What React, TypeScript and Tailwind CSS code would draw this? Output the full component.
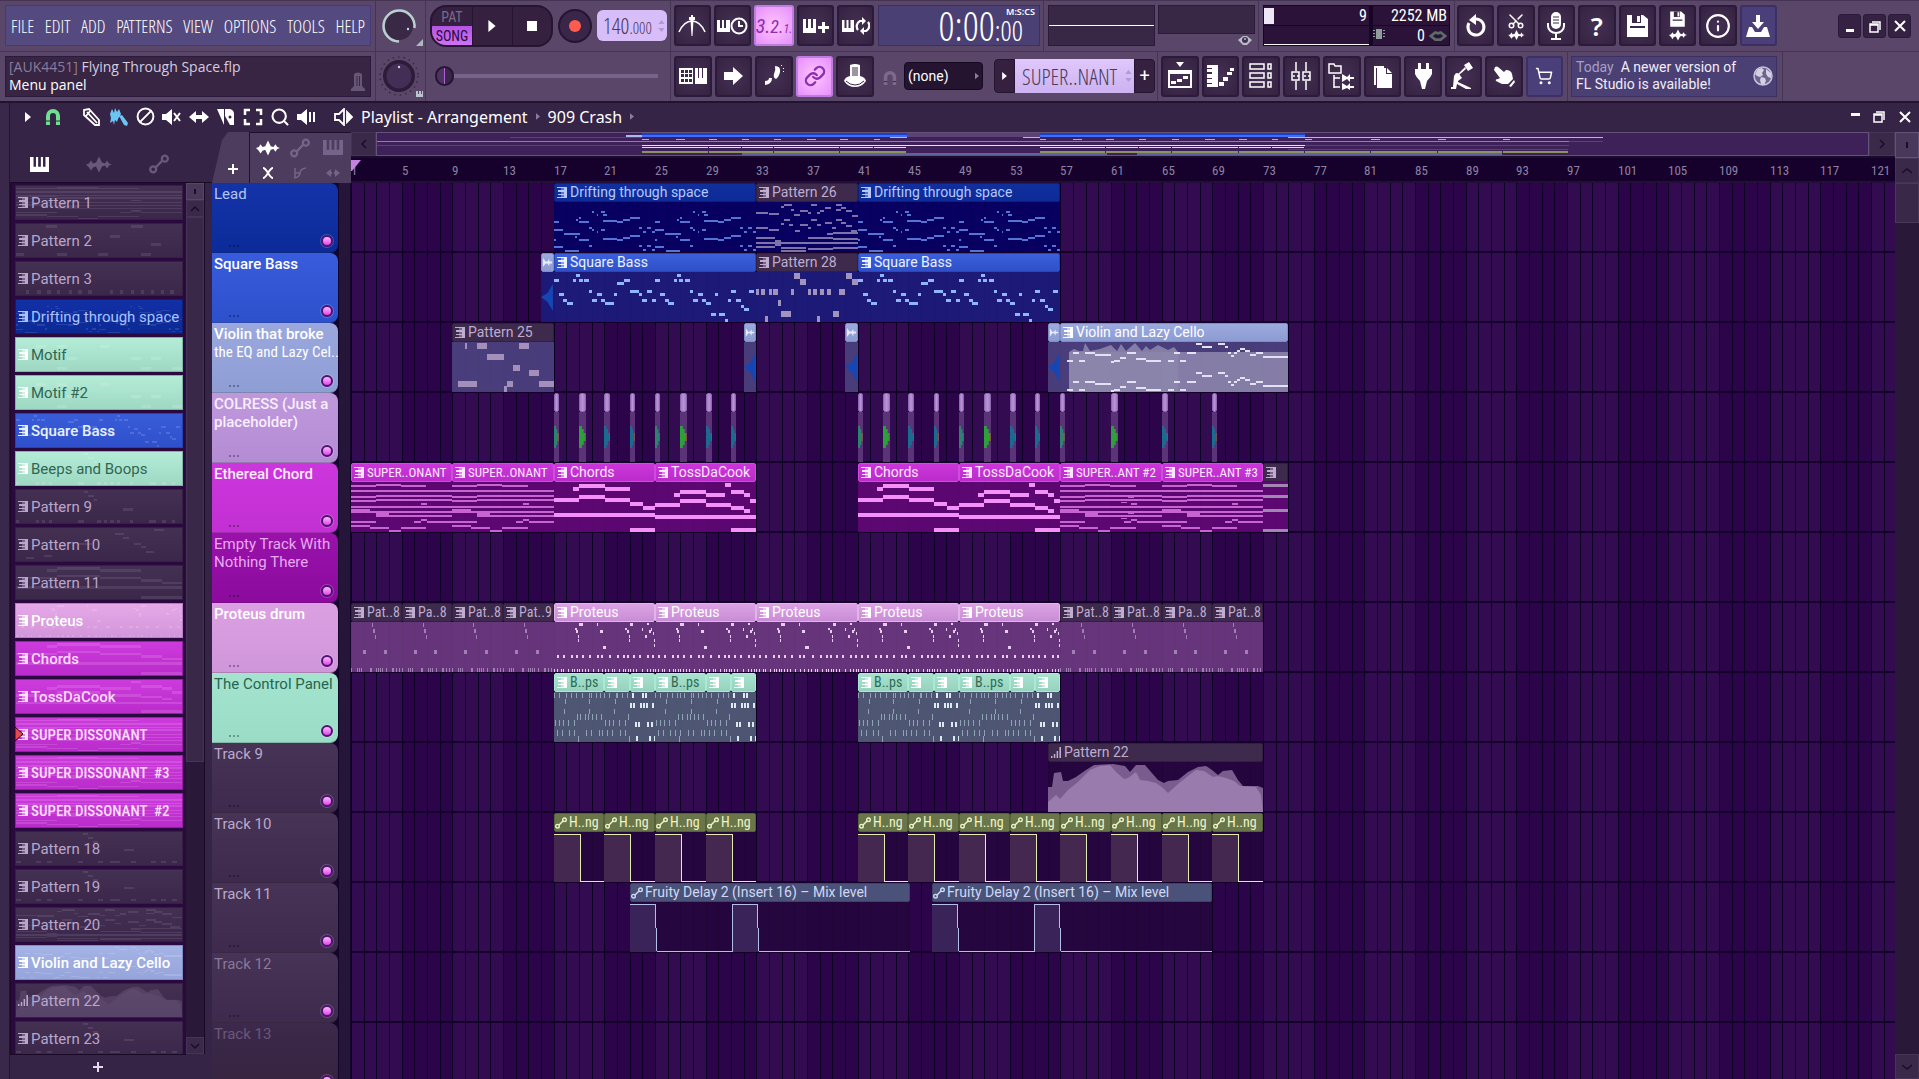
import type { ReactNode } from "react";
import {
  Scissors,
  Info,
  Link,
  ShoppingCart,
  Search,
  Ban,
} from "lucide-react";

// x, y, width, height (px inside a clip body that is 50px high)
type Note = [number, number, number, number];
type Kind = "midi" | "audio" | "auto" | "event";

interface Pattern {
  width: number;
  notes: Note[];
}

const row = (y: number, w: number, h: number, xs: number[]): Note[] => xs.map((x) => [x, y, w, h]);
const tall = (h: number, list: [number, number, number][]): Note[] => list.map(([x, y, w]) => [x, y, w, h]);
const shift = (notes: Note[], dx: number, dy = 0): Note[] => notes.map(([x, y, w, h]) => [x + dx, y + dy, w, h]);

const driftHalf = tall(2, [
  [0, 19, 5], [22, 17, 2], [25, 15, 2], [25, 19, 10], [38, 9, 2], [43, 12, 1], [47, 9, 4], [49, 12, 4],
  [49, 18, 14], [63, 19, 6], [69, 17, 7], [76, 15, 10], [0, 27, 9], [10, 31, 16], [35, 25, 3], [38, 27, 2],
  [49, 36, 14], [63, 37, 6], [69, 35, 7], [76, 33, 10], [25, 37, 10], [21, 34, 2], [0, 37, 2], [0, 44, 9],
  [11, 48, 14], [35, 43, 3], [47, 27, 4], [43, 29, 1], [85, 25, 3], [89, 29, 3], [93, 25, 4], [98, 29, 3],
  [85, 43, 3], [89, 47, 3], [93, 43, 4], [98, 47, 3],
]);

const superNotes = tall(2, [
  [0, 3, 25], [25, 2, 25], [50, 3, 25], [0, 8, 101], [0, 14, 25], [25, 13, 76], [0, 18, 25], [25, 17, 76],
  [70, 21, 6], [0, 24, 101], [0, 27, 19], [0, 29, 101], [25, 31, 13], [25, 33, 76], [0, 39, 25], [63, 39, 7],
  [70, 37, 6], [76, 39, 25], [0, 43, 19], [19, 45, 19], [38, 48, 12], [50, 45, 25],
]);

const celloNotes = tall(2, [
  [7, 18, 6], [13, 10, 6], [19, 18, 6], [25, 10, 10], [35, 12, 16], [51, 19, 3], [54, 18, 6], [60, 15, 6],
  [67, 10, 9], [76, 16, 10], [86, 18, 15], [108, 18, 6], [114, 10, 6], [120, 18, 6], [127, 10, 9],
  [136, 1, 6], [142, 4, 10], [158, 1, 7], [165, 4, 3], [168, 10, 3], [171, 13, 3], [174, 10, 3], [177, 8, 3],
  [180, 6, 5], [185, 8, 5], [190, 12, 6], [196, 10, 7], [203, 14, 25],
]);

const beepRows: Note[] = [
  ...row(1, 1, 5, [0, 5, 12, 17, 22, 25, 29, 36, 38, 43, 47]),
  [11, 7, 1, 5], [36, 7, 1, 5], [10, 17, 1, 5], [36, 17, 1, 5],
  ...row(22, 1, 6, [23, 27, 32, 35, 39, 43, 48]),
  ...row(28, 1, 6, [1, 5, 9, 14, 20]),
  ...row(38, 1, 6, [3, 8, 15, 20, 25, 33, 38, 46, 49]),
  [24, 44, 1, 6],
];

const P: Record<string, Pattern> = {
  drift: { width: 202, notes: [...driftHalf, ...shift(driftHalf, 101)] },
  p26: {
    width: 101,
    notes: tall(2, [
      [0, 10, 12], [13, 11, 10], [28, 2, 8], [25, 4, 3], [35, 7, 3], [38, 12, 6], [44, 8, 7], [51, 10, 3],
      [54, 2, 6], [28, 17, 6], [54, 17, 6], [0, 25, 12], [13, 27, 10], [25, 21, 3], [33, 22, 4], [39, 28, 5],
      [44, 22, 7], [51, 25, 3], [0, 35, 19], [19, 38, 6], [0, 40, 101], [19, 42, 6], [0, 44, 19], [25, 45, 25],
      [25, 48, 25], [51, 35, 25], [76, 36, 25], [51, 46, 25], [76, 45, 25], [76, 30, 25], [70, 31, 6],
      [60, 10, 3], [63, 8, 4], [68, 5, 6], [79, 7, 5], [84, 5, 5], [89, 8, 6], [95, 13, 6], [79, 2, 6],
      [79, 17, 6], [68, 20, 7], [75, 25, 4], [60, 22, 4], [84, 20, 5], [89, 23, 6], [94, 28, 6],
    ]),
  },
  bass: {
    width: 202,
    notes: tall(3, [
      [0, 7, 5], [19, 7, 3], [22, 2, 4], [25, 7, 4], [30, 7, 5], [5, 21, 5], [9, 27, 4], [13, 30, 6], [35, 18, 3],
      [38, 27, 5], [43, 21, 5], [47, 27, 4], [51, 30, 9], [60, 21, 3], [63, 10, 7], [70, 7, 6], [76, 18, 9],
      [85, 21, 3], [88, 27, 5], [93, 18, 5], [98, 27, 4], [101, 7, 5], [106, 21, 5], [111, 27, 4], [114, 30, 6],
      [120, 7, 3], [123, 2, 4], [125, 7, 4], [131, 7, 5], [136, 18, 3], [139, 27, 5], [144, 21, 5], [148, 27, 4],
      [152, 30, 5], [161, 21, 3], [157, 41, 5], [165, 41, 6], [171, 47, 3], [174, 27, 3], [177, 18, 5],
      [182, 27, 5], [187, 33, 3], [190, 36, 5], [195, 18, 5],
    ]),
  },
  p28: {
    width: 101,
    notes: tall(6, [
      [0, 17, 3], [5, 17, 4], [13, 17, 3], [17, 17, 5], [35, 17, 3], [22, 28, 3], [25, 39, 10], [9, 44, 3],
      [38, 1, 6], [44, 7, 6], [51, 17, 3], [56, 17, 4], [63, 17, 4], [70, 17, 4], [82, 17, 6], [89, 1, 6],
      [95, 7, 6], [76, 39, 6], [60, 44, 3],
    ]),
  },
  p25: {
    width: 101,
    notes: tall(6, [
      [13, 1, 2], [25, 1, 10], [66, 1, 10], [35, 12, 16], [60, 23, 7], [76, 28, 10], [6, 39, 19], [54, 39, 6],
      [86, 39, 15], [51, 44, 3],
    ]),
  },
  cello: { width: 228, notes: [...celloNotes, ...shift(celloNotes, 0, 29)] },
  super: { width: 101, notes: superNotes },
  super2: { width: 101, notes: [...superNotes, [60, 20, 6, 1], [67, 15, 6, 1], [67, 31, 6, 1], [60, 36, 6, 1]] },
  chords: {
    width: 101,
    notes: tall(4, [
      [19, 5, 6], [25, 2, 26], [51, 5, 25], [0, 16, 25], [25, 13, 26], [51, 16, 25], [76, 20, 13], [89, 24, 12],
      [0, 31, 101], [76, 46, 25],
    ]),
  },
  toss: {
    width: 101,
    notes: tall(4, [
      [19, 11, 6], [25, 8, 26], [51, 11, 19], [70, 1, 6], [76, 8, 13], [89, 11, 6], [95, 17, 6], [0, 21, 25],
      [25, 17, 26], [51, 21, 25], [76, 24, 13], [89, 27, 6], [0, 33, 101], [76, 46, 25],
    ]),
  },
  tail: { width: 25, notes: row(2, 25, 3, [0]).concat(row(13, 25, 3, [0]), row(27, 25, 3, [0]), row(47, 25, 3, [0])) },
  p8: {
    width: 51,
    notes: [
      [21, 1, 1, 4], [22, 7, 2, 4], [24, 13, 1, 4], [12, 28, 3, 4], [33, 28, 3, 4],
      ...row(46, 1, 4, [0, 6, 8, 10, 19, 20, 25, 27, 29, 31, 35, 41, 42, 45, 48]),
    ],
  },
  proteus: {
    width: 101,
    notes: [
      [25, 1, 4, 3], [43, 1, 1, 3], [76, 1, 3, 3], [93, 1, 2, 2], [21, 6, 2, 2], [22, 8, 2, 3], [24, 13, 1, 3],
      [24, 17, 1, 3], [46, 8, 3, 3], [49, 24, 3, 3], [71, 6, 2, 2], [73, 8, 2, 3], [75, 13, 1, 3],
      [75, 17, 1, 3], [88, 6, 1, 3], [91, 13, 2, 3], [95, 8, 2, 3], [97, 6, 1, 3], [99, 10, 1, 3],
      [100, 17, 1, 3], [100, 22, 1, 3],
      ...row(33, 2, 3, [3, 9, 17, 22, 28, 35, 43, 47, 55, 63, 69, 73, 79, 85, 93, 98]),
      ...row(47, 1, 3, [0, 3, 7, 9, 14, 18, 20, 23, 25, 28, 31, 34, 39, 44, 48, 51, 54, 58, 60, 65, 69, 71, 74, 76, 79, 82, 88, 93, 96, 99]),
    ],
  },
  beeps: { width: 51, notes: beepRows },
  beepsShort: { width: 25, notes: beepRows.filter(([x]) => x < 25) },
  beepsEnd: {
    width: 25,
    notes: [
      ...row(1, 2, 5, [2, 12, 15]),
      ...row(11, 2, 5, [0, 3, 10, 13, 16, 22]),
      ...row(30, 2, 5, [5, 8, 17, 21]),
      ...row(44, 2, 5, [6, 19, 24]),
    ],
  },
  p2: { width: 101, notes: tall(4, [[18, 2, 7], [70, 2, 7], [57, 17, 6], [25, 29, 6], [82, 29, 6], [0, 44, 5], [25, 44, 6], [50, 44, 6], [76, 44, 6]]) },
  p3: { width: 101, notes: row(43, 2, 5, [6, 13, 19, 25, 32, 38, 44, 57, 63, 70, 76, 82, 88, 94]) },
  motif: { width: 101, notes: tall(4, [[12, 11, 6], [25, 11, 6], [51, 11, 6], [31, 29, 6], [70, 29, 6], [82, 29, 6], [25, 44, 6], [76, 44, 6], [95, 44, 6]]) },
  p10: { width: 101, notes: tall(3, [[84, 1, 6], [60, 7, 6], [65, 14, 4], [38, 22, 8], [72, 22, 4], [76, 28, 3], [79, 35, 5], [17, 41, 5], [6, 44, 5]]) },
  p18: { width: 101, notes: tall(3, [[41, 1, 3], [44, 7, 3], [47, 13, 3], [66, 26, 6], [0, 44, 3], [12, 44, 3], [19, 44, 3], [38, 44, 3], [50, 44, 3], [57, 44, 6], [70, 44, 3], [82, 44, 3], [88, 44, 3], [95, 44, 3]]) },
  empty: { width: 25, notes: [] },
};

interface PickerItem {
  name: string;
  tone: string;
  pattern: keyof typeof P;
  kind?: Kind;
  selected?: boolean;
}

const PICKER: PickerItem[] = [
  { name: "Pattern 1", tone: "plain", pattern: "super" },
  { name: "Pattern 2", tone: "plain", pattern: "p2" },
  { name: "Pattern 3", tone: "plain", pattern: "p3" },
  { name: "Drifting through space", tone: "navy", pattern: "drift" },
  { name: "Motif", tone: "mint", pattern: "motif" },
  { name: "Motif #2", tone: "mint", pattern: "motif" },
  { name: "Square Bass", tone: "blue", pattern: "bass" },
  { name: "Beeps and Boops", tone: "mint", pattern: "p8" },
  { name: "Pattern 9", tone: "plain", pattern: "p8" },
  { name: "Pattern 10", tone: "plain", pattern: "p10" },
  { name: "Pattern 11", tone: "plain", pattern: "chords" },
  { name: "Proteus", tone: "pink", pattern: "proteus" },
  { name: "Chords", tone: "magenta", pattern: "chords" },
  { name: "TossDaCook", tone: "magenta", pattern: "toss" },
  { name: "SUPER DISSONANT", tone: "magenta", pattern: "super", selected: true },
  { name: "SUPER DISSONANT  #3", tone: "magenta", pattern: "super" },
  { name: "SUPER DISSONANT  #2", tone: "magenta", pattern: "super" },
  { name: "Pattern 18", tone: "plain", pattern: "p18" },
  { name: "Pattern 19", tone: "plain", pattern: "p18" },
  { name: "Pattern 20", tone: "plain", pattern: "p26" },
  { name: "Violin and Lazy Cello", tone: "sky", pattern: "cello" },
  { name: "Pattern 22", tone: "plain", pattern: "empty", kind: "event" },
  { name: "Pattern 23", tone: "plain", pattern: "p18" },
];

const PICKER_TONES: Record<string, string> = {
  plain: "from-[#443051] to-[#3b274a] border-[#34213f] text-[#b9a6cc]",
  navy: "from-[#1230a6] to-[#0c2a94] border-[#0a1f78] text-[#a9c4ff]",
  mint: "from-[#b4ecd8] to-[#9ed8c2] border-[#7fb5a2] text-[#2f6653]",
  blue: "from-[#395cda] to-[#2f50ca] border-[#2643ab] text-[#e8f2ff] font-medium",
  pink: "from-[#e6a8e8] to-[#d196da] border-[#b77fc0] text-white font-medium",
  magenta: "from-[#cd3bdc] to-[#ba2bcb] border-[#94209f] text-[#ffdcff] font-medium",
  sky: "from-[#a5b3e6] to-[#95a4da] border-[#7f8cc0] text-white font-medium",
};

interface Clip {
  start: number;
  end: number;
  title?: string;
  tone: string;
  pattern?: keyof typeof P;
  kind?: Kind;
  note?: string;
}

const TONES: Record<string, { head: string; map: string }> = {
  navy: { head: "bg-linear-to-b from-[#10309f] to-[#0d2a96] border-[#0a227c] text-[#b4c8ff]", map: "#1c3fc4" },
  blue: { head: "bg-linear-to-b from-[#3b60dc] to-[#2f50c8] border-[#2a48b4] text-[#eaf2ff]", map: "#3f6cff" },
  plain: { head: "bg-[#3d2a4d] border-[#33203f] text-[#bfaccf]", map: "#5c4173" },
  sky: { head: "bg-linear-to-b from-[#9caadf] to-[#8c9bd2] border-[#7f8dc4] text-white", map: "#a9b9f2" },
  lilac: { head: "bg-linear-to-r from-[#a37bc4] via-[#b894d6] to-[#a37bc4] border-[#8f68b3] text-white", map: "#c79ee6" },
  magenta: { head: "bg-linear-to-b from-[#cb36da] to-[#bb2ccb] border-[#d24be0] text-[#ffe6ff]", map: "#ee40ee" },
  pink: { head: "bg-linear-to-b from-[#dca2e4] to-[#c98dd6] border-[#e3b3ea] text-white", map: "#ffd2ff" },
  mint: { head: "bg-linear-to-b from-[#a6e2cd] to-[#97d2be] border-[#a9ead2] text-[#2c6a55]", map: "#b8f2e2" },
  olive: { head: "bg-[#69764a] border-[#566239] text-[#eef3c8]", map: "#8b9460" },
  slate: { head: "bg-[#4b5279] border-[#3d4468] text-[#cfd8f4]", map: "#5f629c" },
};

interface Track {
  name: string;
  // second line, set in the narrow face
  more?: string;
  header: string;
  body: string;
  clips: Clip[];
}

const blips = [17, 19, 21, 23, 25, 27, 29, 31, 41, 43, 45, 47, 49, 51, 53, 55, 57, 61, 65, 69];

const beepClips = (s: number): Clip[] =>
  [0, 8].flatMap((o) => [
    { start: s + o, end: s + o + 4, title: "B..ps", tone: "mint", pattern: "beeps", note: "#8fa3b4" },
    { start: s + o + 4, end: s + o + 6, title: "", tone: "mint", pattern: "beepsShort", note: "#8fa3b4" },
    { start: s + o + 6, end: s + o + 8, title: "", tone: "mint", pattern: "beepsEnd", note: "#dcebf0" },
  ]);

const pat = (start: number, title: string): Clip => ({ start, end: start + 4, title, tone: "plain", pattern: "p8", note: "#a07fb4" });
const hang = (start: number): Clip => ({ start, end: start + 4, title: "H..ng", tone: "olive", kind: "auto" });
const proteus = (start: number): Clip => ({ start, end: start + 8, title: "Proteus", tone: "pink", pattern: "proteus", note: "#e9cdf0" });

const TRACKS: Track[] = [
  {
    name: "Lead",
    header: "from-[#1433a8] to-[#0c2b99] text-[#b4c4f4]",
    body: "bg-[#050063]/90",
    clips: [
      { start: 17, end: 33, title: "Drifting through space", tone: "navy", pattern: "drift", note: "#5674d2" },
      { start: 33, end: 41, title: "Pattern 26", tone: "plain", pattern: "p26", note: "#7d72aa" },
      { start: 41, end: 57, title: "Drifting through space", tone: "navy", pattern: "drift", note: "#5674d2" },
    ],
  },
  {
    name: "Square Bass",
    header: "from-[#385cdc] to-[#2d50cc] text-white font-medium",
    body: "bg-[#1b1c7c]/90",
    clips: [
      { start: 16, end: 17, tone: "sky", kind: "audio" },
      { start: 17, end: 33, title: "Square Bass", tone: "blue", pattern: "bass", note: "#90b6ff" },
      { start: 33, end: 41, title: "Pattern 28", tone: "plain", pattern: "p28", note: "#a094bf" },
      { start: 41, end: 57, title: "Square Bass", tone: "blue", pattern: "bass", note: "#90b6ff" },
    ],
  },
  {
    name: "Violin that broke",
    more: "the EQ and Lazy Cel..",
    header: "from-[#9aa8de] to-[#8e9dd4] text-white font-medium",
    body: "bg-[#4c4280]/90",
    clips: [
      { start: 9, end: 17, title: "Pattern 25", tone: "plain", pattern: "p25", note: "#a48fbb" },
      { start: 32, end: 33, tone: "sky", kind: "audio" },
      { start: 40, end: 41, tone: "sky", kind: "audio" },
      { start: 56, end: 57, tone: "sky", kind: "audio" },
      { start: 57, end: 75, title: "Violin and Lazy Cello", tone: "sky", pattern: "cello", note: "#e2e2f4" },
    ],
  },
  {
    name: "COLRESS (Just a placeholder)",
    header: "from-[#bf98dc] to-[#b48cd4] text-[#f8eeff] font-medium",
    body: "bg-[#5a3476]",
    clips: blips.map((start, i) => ({
      start,
      end: start + [0.4, 0.55, 0.48, 0.4][i % 4],
      tone: "lilac",
      kind: "audio",
      note: start === 61 || (start < 60 && i % 4 === 1) ? "#2f9e3c" : i % 4 === 0 ? "#2d8272" : "#1d6a90",
    })),
  },
  {
    name: "Ethereal Chord",
    header: "from-[#cb37dc] to-[#c22fd2] text-[#ffeaff] font-medium",
    body: "bg-[#620775]/90",
    clips: [
      { start: 1, end: 9, title: "SUPER..ONANT", tone: "magenta", pattern: "super", note: "#c863d2" },
      { start: 9, end: 17, title: "SUPER..ONANT", tone: "magenta", pattern: "super", note: "#c863d2" },
      { start: 17, end: 25, title: "Chords", tone: "magenta", pattern: "chords", note: "#f590f8" },
      { start: 25, end: 33, title: "TossDaCook", tone: "magenta", pattern: "toss", note: "#f590f8" },
      { start: 41, end: 49, title: "Chords", tone: "magenta", pattern: "chords", note: "#f590f8" },
      { start: 49, end: 57, title: "TossDaCook", tone: "magenta", pattern: "toss", note: "#f590f8" },
      { start: 57, end: 65, title: "SUPER..ANT #2", tone: "magenta", pattern: "super2", note: "#c863d2" },
      { start: 65, end: 73, title: "SUPER..ANT #3", tone: "magenta", pattern: "super", note: "#c863d2" },
      { start: 73, end: 75, title: "", tone: "plain", pattern: "tail", note: "#a286b2" },
    ],
  },
  { name: "Empty Track With Nothing There", header: "from-[#9912aa] to-[#8c0a9e] text-[#e9a8f2]", body: "", clips: [] },
  {
    name: "Proteus drum",
    header: "from-[#dba0e2] to-[#d096da] text-white font-medium",
    body: "bg-[#6c3a80]/90",
    clips: [
      pat(1, "Pat..8"), pat(5, "Pa..8"), pat(9, "Pat..8"), pat(13, "Pat..9"),
      proteus(17), proteus(25), proteus(33), proteus(41), proteus(49),
      pat(57, "Pat..8"), pat(61, "Pat..8"), pat(65, "Pa..8"), pat(69, "Pat..8"),
    ],
  },
  {
    name: "The Control Panel",
    header: "from-[#a4e4ce] to-[#9adcc6] text-[#2a6450]",
    body: "bg-[#515e78]/90",
    clips: [...beepClips(17), ...beepClips(41)],
  },
  {
    name: "Track 9",
    header: "from-[#463355] to-[#3d2a4d] text-[#bba9c9]",
    body: "bg-[#24053c]/90",
    clips: [{ start: 56, end: 73, title: "Pattern 22", tone: "plain", kind: "event" }],
  },
  {
    name: "Track 10",
    header: "from-[#463355] to-[#3d2a4d] text-[#bba9c9]",
    body: "bg-[#24053c]/90",
    clips: [17, 21, 25, 29, 41, 45, 49, 53, 57, 61, 65, 69].map(hang),
  },
  {
    name: "Track 11",
    header: "from-[#463355] to-[#3d2a4d] text-[#bba9c9]",
    body: "bg-[#24053c]/90",
    clips: [
      { start: 23, end: 45.1, title: "Fruity Delay 2 (Insert 16) – Mix level", tone: "slate", kind: "auto" },
      { start: 46.9, end: 69, title: "Fruity Delay 2 (Insert 16) – Mix level", tone: "slate", kind: "auto" },
    ],
  },
  { name: "Track 12", header: "from-[#463355] to-[#3d2a4d] text-[#8a7799]", body: "", clips: [] },
  { name: "Track 13", header: "from-[#3c294b] to-[#35233f] text-[#6a577a]", body: "", clips: [] },
];

const COND = "font-['Roboto_Condensed','Roboto',sans-serif]";
const NARROW = "font-['Open_Sans_Condensed_Light','Open_Sans_Condensed','Roboto_Condensed','Roboto',sans-serif]";
const barX = (bar: number) => Math.round(((bar - 1) * 38) / 3);

/* ---------- small drawings ---------- */

function PatternIcon() {
  return (
    <svg width="10" height="11" viewBox="0 0 10 11" className="shrink-0" fill="currentColor" shapeRendering="crispEdges">
      <path d="M7 0h3v11H7zM0 0h7v1H0zM1 3h6v2H1zM1 7h6v1H1zM0 10h7v1H0z" />
      <path d="M4 0h3v11H4z" opacity=".45" />
    </svg>
  );
}

function LinkNodes({ size = 12 }: { size?: number }) {
  return (
    <svg width={size} height={size} viewBox="0 0 12 12" className="shrink-0" fill="none" stroke="currentColor" strokeWidth="1.4">
      <circle cx="2.5" cy="9.2" r="1.8" />
      <circle cx="9.5" cy="2.8" r="1.8" />
      <path d="M4 8l4-4" />
    </svg>
  );
}

function BarsIcon() {
  return (
    <svg width="10" height="11" viewBox="0 0 10 11" className="shrink-0" fill="currentColor">
      <path d="M0 9h1.5v2H0zM2.8 7h1.5v4H2.8zM5.6 4h1.5v7H5.6zM8.4 0H10v11H8.4z" />
    </svg>
  );
}

function KindIcon({ kind = "midi" }: { kind?: Kind }) {
  if (kind === "auto") return <LinkNodes />;
  if (kind === "event") return <BarsIcon />;
  return <PatternIcon />;
}

function Keys({ className }: { className?: string }) {
  return (
    <svg viewBox="0 0 14 14" preserveAspectRatio="none" className={className} fill="currentColor">
      <path d="M0 0H2.6V9H4.4V0H6V9H8V0H9.6V9H11.4V0H14V14H0Z" />
    </svg>
  );
}

function Wave({ className }: { className?: string }) {
  return (
    <svg viewBox="0 0 26 16" className={className} fill="currentColor">
      <path d="M0 8l3-1 2-3 2 3 3-1 3-6 3 6 3 1 2-3 2 3 3 1-3 1-2 3-2-3-3 1-3 6-3-6-3 1-2 3-2-3z" />
    </svg>
  );
}

function Magnet({ className }: { className?: string }) {
  return (
    <svg viewBox="0 0 16 18" className={className} fill="none" stroke="currentColor" strokeWidth="4">
      <path d="M3 17V8a5 5 0 0 1 10 0v9" />
      <path d="M1 13h4M11 13h4" stroke="#352445" strokeWidth="1" />
    </svg>
  );
}

function Chevron({ d }: { d: string }) {
  return (
    <svg viewBox="0 0 10 10" className="size-[10px]" fill="none" stroke="#1c0c2b" strokeWidth="1.5">
      <path d={d} />
    </svg>
  );
}

function Tri({ className }: { className?: string }) {
  return (
    <svg viewBox="0 0 6 10" className={className} fill="currentColor">
      <path d="M0 0l6 5-6 5z" />
    </svg>
  );
}

function UpDown() {
  return (
    <span className="ml-auto flex flex-col gap-1 pr-[2px] text-[#b39ad2]">
      <svg viewBox="0 0 8 5" className="h-1 w-[7px]" fill="currentColor"><path d="M4 0l4 5H0z" /></svg>
      <svg viewBox="0 0 8 5" className="h-1 w-[7px]" fill="currentColor"><path d="M4 5l4-5H0z" /></svg>
    </span>
  );
}

function Glyph({ children, className = "size-7" }: { children: ReactNode; className?: string }) {
  return (
    <svg viewBox="0 0 28 28" className={className} fill="currentColor" stroke="none">
      {children}
    </svg>
  );
}

/* ---------- toolbar ---------- */

function Tool({ label, tone = "dark", children }: { label: string; tone?: "dark" | "lit" | "blue"; children: ReactNode }) {
  const tones = {
    dark: "bg-radial from-[#443054] to-[#35213f] border-[#2b1a3b] text-white",
    lit: "bg-radial from-[#ffc4ff] to-[#e68ffa] border-[#c07be0] text-[#8a2fb0]",
    blue: "bg-[#4a3f78] border-[#3b2f63] text-white",
  };
  return (
    <button
      type="button"
      aria-label={label}
      title={label}
      className={`flex h-[41px] flex-1 items-center justify-center rounded-[3px] border-2 ${tones[tone]}`}
    >
      {children}
    </button>
  );
}

function Group({ className, children }: { className?: string; children: ReactNode }) {
  return <div className={`flex h-full shrink-0 items-center border-r border-[#463454] pb-px ${className ?? ""}`}>{children}</div>;
}

function TopRow() {
  return (
    <div className="flex h-[51px] border-b border-[#463454]">
      <Group className="w-[376px] pl-[5px] pr-1">
        <nav className={`flex h-[41px] flex-1 items-center justify-between border border-[#46397a] bg-[#544a80] px-[5px] text-[18px] leading-6 text-white ${NARROW}`}>
          {["FILE", "EDIT", "ADD", "PATTERNS", "VIEW", "OPTIONS", "TOOLS", "HELP"].map((m) => (
            <button key={m} type="button">{m}</button>
          ))}
        </nav>
      </Group>
      <Group className="w-[50px] justify-center">
        <svg viewBox="0 0 48 46" className="h-[46px] w-12">
          <circle cx="22" cy="23" r="14" fill="#3a2847" />
          <path d="M22 38.5A15.5 15.5 0 1 1 37.4 25" fill="none" stroke="#b9d0d0" strokeWidth="2.5" />
          <circle cx="31" cy="26" r="1.2" fill="#c5d5d8" />
          <path d="M46 36v7h-7z" fill="#a8bcc0" />
        </svg>
      </Group>
      <Group className="w-[245px] gap-[5px] pl-1">
        <div className="flex h-[42px] w-[123px] overflow-hidden rounded-[16px] border-2 border-[#251533] bg-[#35213f]">
          <div className={`flex w-10 flex-col text-[14px] leading-5 ${COND}`}>
            <button type="button" className="h-[19px] text-[#7b6a8b]">PAT</button>
            <button type="button" className="h-[19px] bg-linear-to-b from-[#b455e4] to-[#d070f4] text-[#2b0a3c]">SONG</button>
          </div>
          <button type="button" aria-label="Play" className="flex flex-1 items-center justify-center border-l border-[#251533] text-white">
            <Tri className="h-3 w-2" />
          </button>
          <button type="button" aria-label="Stop" className="flex flex-1 items-center justify-center border-l border-[#251533]">
            <span className="size-[10px] bg-white" />
          </button>
        </div>
        <button type="button" aria-label="Record" className="flex size-[34px] items-center justify-center rounded-full border-2 border-[#251533] bg-[#3a2648]">
          <span className="size-3 rounded-full bg-[#ff5c50]" />
        </button>
        <button type="button" aria-label="Tempo" className={`flex h-[31px] w-[70px] items-center rounded-[6px] bg-[#d8bef8] pl-[6px] text-[#4b3a5c] ${NARROW}`}>
          <span className="text-[22px]">140</span>
          <span className="pt-1 text-[16px]">.000</span>
          <UpDown />
        </button>
      </Group>
      <Group className="w-[373px] gap-1 pl-[3px]">
        <div className="flex w-[200px] gap-[3px]">
          <Tool label="Metronome">
            <Glyph>
              <path d="M11 5h2V3h2v2h2v3h-1.500L14.500 24h-1L12.500 8H11z" />
              <path d="M1 20Q6 9 14 9T27 20" fill="none" stroke="currentColor" strokeWidth="1.500" />
            </Glyph>
          </Tool>
          <Tool label="Wait for input">
            <Glyph className="h-7 w-8">
              <path d="M-1 8h3v8h2V8h2v8h2V8h4v12H-1z" />
              <circle cx="21" cy="14" r="7.500" fill="none" stroke="currentColor" strokeWidth="2" />
              <path d="M21 9v5h4" fill="none" stroke="currentColor" strokeWidth="2" />
            </Glyph>
          </Tool>
          <Tool label="Countdown" tone="lit">
            <span className={`flex items-baseline italic ${COND}`}>
              <span className="text-[20px]">3.</span>
              <span className="text-[18px]">2.</span>
              <span className="text-[12px]">1.</span>
            </span>
          </Tool>
          <Tool label="Overdub">
            <Glyph>
              <path d="M1 7h3v9h2V7h3v9h2V7h3v14H1zM20 10h3v4h4v3h-4v4h-3v-4h-4v-3h4z" />
            </Glyph>
          </Tool>
          <Tool label="Loop record">
            <Glyph>
              <path d="M0 8h2.500v8h2V8h2v8h2V8H12v12H0z" />
              <path d="M16 18a6 6 0 0 1 2-9h3M26 10a6 6 0 0 1-2 9h-3" fill="none" stroke="currentColor" strokeWidth="2.200" />
              <path d="M20 5l4 4-4 4zM22 15l-4 4 4 4z" />
            </Glyph>
          </Tool>
        </div>
        <div className={`relative flex h-[41px] w-[162px] items-baseline justify-end border border-[#3b2f63] bg-[#4b4074] pr-4 text-white ${NARROW}`}>
          <span className="text-[40px] leading-[39px]">0:00</span>
          <span className="text-[28px] leading-6">:00</span>
          <span className="absolute top-0 right-1 font-['Noto_Sans'] text-[9px] leading-3 font-semibold">M:S:CS</span>
        </div>
      </Group>
      <Group className="w-[215px] gap-[3px] pl-1">
        <div className="flex h-[41px] w-[107px] items-center border border-[#2b1a3b] bg-[#382745]">
          <span className="h-px w-full bg-white" />
        </div>
        <div className="flex h-[41px] flex-col items-end">
          <div className="h-[29px] w-[97px] border border-[#2b1a3b] bg-[#382745]" />
          <svg viewBox="0 0 16 12" className="mr-[2px] h-3 w-4" fill="#b9bdc8">
            <path d="M1 6l5-4h4l5 4-5 5H6z" />
            <circle cx="8" cy="6" r="3" fill="#443254" />
            <circle cx="8" cy="5" r="1" />
          </svg>
        </div>
      </Group>
      <Group className="w-[196px] pl-1">
        <div className={`flex h-[41px] w-[187px] gap-1 bg-[#160524] p-px text-[16px] leading-[19px] text-white ${COND}`}>
          <div className="flex w-[105px] flex-col gap-px">
            <div className="flex h-[19px] justify-between bg-[#2a1238] pr-[2px]">
              <span className="mt-[2px] h-4 w-[10px] bg-[#eee6f4]" />
              <span>9</span>
            </div>
            <div className="flex-1 border-b border-white bg-[#2a1238]" />
          </div>
          <div className="flex flex-1 flex-col gap-px">
            <div className="h-[19px] bg-[#2a1238] pr-[2px] text-right">2252 MB</div>
            <div className="flex flex-1 items-center bg-[#2a1238] pr-[2px]">
              <svg viewBox="0 0 12 10" className="mb-1 h-[10px] w-3" fill="#8f9d9d">
                <path d="M3 0h6v10H3zM0 1h2v1H0zM0 4h2v1H0zM0 7h2v1H0zM10 1h2v1h-2zM10 4h2v1h-2zM10 7h2v1h-2z" />
              </svg>
              <span className="ml-auto pr-1">0</span>
              <svg viewBox="0 0 20 12" className="h-3 w-[18px]" fill="none" stroke="#5e6c68" strokeWidth="3">
                <path d="M2 6l5-4 3 1 3-1 5 4-5 4H7z" />
              </svg>
            </div>
          </div>
        </div>
      </Group>
      <div className="flex items-center pb-px pl-[2px]">
        <div className="flex w-[320px] gap-[3px]">
          <Tool label="Undo">
            <Glyph>
              <path d="M13 7h1a8 8 0 1 1-7 4" fill="none" stroke="currentColor" strokeWidth="3" />
              <path d="M14 2v11L7 8z" />
            </Glyph>
          </Tool>
          <Tool label="Cut">
            <span className="flex flex-col items-center">
              <Scissors className="size-[18px] -rotate-90" strokeWidth={2} />
              <Wave className="h-[10px] w-[17px]" />
            </span>
          </Tool>
          <Tool label="Record audio">
            <Glyph className="h-[30px] w-7">
              <rect x="9" y="0" width="10" height="17" rx="5" />
              <path d="M11 5h6M11 8h6M11 11h6" stroke="#3c2849" strokeWidth="1" />
              <path d="M6 11v3a8 7 0 0 0 16 0v-3M14 21v5M9 27h10" fill="none" stroke="currentColor" strokeWidth="2" />
            </Glyph>
          </Tool>
          <Tool label="Help"><span className="font-['Noto_Sans'] text-[26px] leading-7 font-semibold">?</span></Tool>
          <Tool label="Save">
            <Glyph className="size-7">
              <path d="M4 3h16l5 4v18H4z" />
              <path d="M9 3h9v8H9zM7 14h15v2H7z" fill="#3c2849" />
              <path d="M14 4h3v6h-3z" />
            </Glyph>
          </Tool>
          <Tool label="Export">
            <span className="flex flex-col items-center gap-px">
              <Glyph className="size-[17px]">
                <path d="M2 1h18l6 5v20H2z" />
                <path d="M8 1h10v9H8zM6 14h16v2H6z" fill="#3c2849" />
                <path d="M14 2h3v7h-3z" />
              </Glyph>
              <Wave className="h-3 w-[18px]" />
            </span>
          </Tool>
          <Tool label="About"><Info className="size-[26px]" strokeWidth={2} /></Tool>
          <Tool label="Download" tone="blue">
            <Glyph className="size-7">
              <path d="M12 3h4v7h4l-6 7-6-7h4z" />
              <path d="M5 15h3l3 5h6l3-5h3l3 10H2z" />
            </Glyph>
          </Tool>
        </div>
      </div>
      <div className="ml-auto flex items-center gap-[2px] pr-2">
        {[
          ["Minimize", <path key="a" d="M3 10h8v3H3z" fill="currentColor" />],
          ["Restore", <path key="b" d="M4 3h8v8M2 5h8v8H2zM2 6h8" fill="none" stroke="currentColor" strokeWidth="1.500" />],
          ["Close", <path key="c" d="M2 2l10 10M12 2L2 12" fill="none" stroke="currentColor" strokeWidth="2" />],
        ].map(([label, shape]) => (
          <button key={label as string} type="button" aria-label={label as string} className="flex h-6 w-[23px] items-center justify-center rounded-[3px] border border-[#2b1a3b] bg-[#352142] text-white">
            <svg viewBox="0 0 14 14" className="size-[14px]">{shape}</svg>
          </button>
        ))}
      </div>
    </div>
  );
}

function SecondRow() {
  return (
    <div className="flex h-[51px] border-b-2 border-[#22132f]">
      <Group className="w-[376px] pl-[5px] pr-1">
        <div className="flex h-[41px] flex-1 items-center justify-between border border-[#2b1a3b] bg-[#372543] pl-[3px] pr-1 text-[14px] leading-[18px]">
          <div className="font-['Open_Sans']">
            <p className="text-[#d6cbe0]"><span className="text-[#8c7b9b]">[AUK4451]</span> Flying Through Space.flp</p>
            <p className="text-white">Menu panel</p>
          </div>
          <svg viewBox="0 0 16 20" className="mt-3 h-5 w-4" fill="#675675">
            <path d="M4 2q4-3 8 0v12l3 3v2H1v-2l3-3z" />
            <path d="M7 4v10M9.500 4v10" stroke="#3a2847" strokeWidth="1" />
          </svg>
        </div>
      </Group>
      <Group className="w-[50px] justify-center">
        <svg viewBox="0 0 48 46" className="h-[46px] w-12">
          <circle cx="22" cy="23" r="19" fill="none" stroke="#3a2847" strokeWidth="1.500" strokeDasharray="1.500 4" />
          <circle cx="22" cy="23" r="16" fill="#2c1b39" />
          <circle cx="22" cy="23" r="12.500" fill="#432f55" />
          <circle cx="22" cy="14" r="1.200" fill="#d8cbe2" />
          <path d="M39 38h2v3h1v-3h2v3h1v-3h1v6h-7z" fill="#b9c4cc" />
        </svg>
      </Group>
      <Group className="w-[245px] pl-[9px] pr-3">
        <input
          type="range"
          aria-label="Main pitch"
          defaultValue={0}
          className="h-6 w-full appearance-none bg-transparent [&::-webkit-slider-runnable-track]:h-1 [&::-webkit-slider-runnable-track]:bg-[#76638a] [&::-webkit-slider-thumb]:-mt-2 [&::-webkit-slider-thumb]:h-5 [&::-webkit-slider-thumb]:w-[19px] [&::-webkit-slider-thumb]:appearance-none [&::-webkit-slider-thumb]:rounded-full [&::-webkit-slider-thumb]:border-2 [&::-webkit-slider-thumb]:border-[#251533] [&::-webkit-slider-thumb]:bg-[linear-gradient(90deg,#4b3560_45%,#b060d8_45%,#b060d8_55%,#3a2648_55%)]"
        />
      </Group>
      <Group className="w-[487px] pl-[3px]">
        <div className="flex w-[200px] gap-[3px]">
          <Tool label="Typing keyboard">
            <Glyph className="h-7 w-8">
              <path d="M0 6h14v16H0z" />
              <path d="M2 8h3v3H2zM6 8h3v3H6zM10 8h3v3h-3zM2 12h3v3H2zM6 12h3v3H6zM10 12h3v3h-3zM2 17h3v3H2zM6 17h3v3H6zM10 17h3v3h-3z" fill="#3c2849" />
              <path d="M16 6h3v10h1V6h3v10h1V6h4v16H16z" />
            </Glyph>
          </Tool>
          <Tool label="Auto scroll"><Glyph><path d="M5 10h9V5l10 9-10 9v-5H5z" /></Glyph></Tool>
          <Tool label="Step edit">
            <Glyph>
              <path d="M15 4q6 0 5 6-1 5-4 7-3-1-2-5 2-4 1-8zM5 19q4 0 4-3h3q0 6-7 7z" />
              <path d="M21 3h1v1h-1zM23 6h1v1h-1zM23 9h1v1h-1z" />
            </Glyph>
          </Tool>
          <Tool label="Link" tone="lit"><Link className="size-[22px]" strokeWidth={2.5} /></Tool>
          <Tool label="Multilink">
            <Glyph>
              <path d="M9 3q5-2 10 0v11q5 1 6 5-4 6-11 6T3 19q1-4 6-5z" />
              <path d="M5 19q4 4 9 4t9-4" fill="none" stroke="#3c2849" />
              <path d="M12 5v9M14 5v9M16 5v9" stroke="#3c2849" strokeWidth="1" />
            </Glyph>
          </Tool>
        </div>
        <Magnet className="ml-2 mt-1 h-4 w-4 text-[#7b6a8a]" />
        <div className="relative ml-[6px] h-7 w-[79px] text-white">
          <select aria-label="Snap" className="h-7 w-full appearance-none rounded-[4px] border border-[#150a20] bg-[#24142f] pl-[3px] text-[14px]">
            <option>(none)</option>
          </select>
          <Tri className="pointer-events-none absolute top-[10px] right-1 h-2 w-1 text-[#8d7c9c]" />
        </div>
        <div className="ml-[11px] flex h-[34px]">
          <button type="button" aria-label="Pattern menu" className="flex w-[21px] items-center justify-center rounded-l-[4px] border border-[#251533] bg-[#35213f] text-white">
            <Tri className="h-2 w-[5px]" />
          </button>
          <button type="button" className={`flex w-[119px] items-center bg-linear-to-b from-[#e0c8fc] to-[#ccb2f0] pl-[7px] text-[22px] leading-8 text-[#4b3a5c] ${NARROW}`}>
            SUPER..NANT
            <UpDown />
          </button>
          <button type="button" className="w-[21px] rounded-r-[4px] border border-[#251533] bg-[#35213f] text-[18px] leading-6 text-white">+</button>
        </div>
      </Group>
      <Group className="w-[410px] pl-[3px]">
        <div className="flex w-[402px] gap-[3px]">
          <Tool label="Playlist">
            <Glyph>
              <path d="M10 0h8l-4 5zM2 8h24v18H2zM4 12v12h20V12z" fillRule="evenodd" />
              <path d="M5 19h5v3H5zM11 17h5v3h-5zM17 14h5v3h-5z" />
            </Glyph>
          </Tool>
          <Tool label="Piano roll">
            <Glyph>
              <path d="M1 3h11v22H1v-3h5v-1H1v-4h5v-1H1v-4h5v-2H1V7h5V6H1zM13 20h5v4h-5zM17 15h5v4h-5zM21 10h5v3h-5zM24 6h4v3h-4z" />
            </Glyph>
          </Tool>
          <Tool label="Channel rack">
            <Glyph className="size-7">
              <g fill="none" stroke="currentColor" strokeWidth="1.500">
                <path d="M3 2h14v5H3zM21 2h3v5h-3zM3 11h14v5H3zM21 11h3v5h-3zM3 20h14v5H3zM21 20h3v5h-3z" />
              </g>
            </Glyph>
          </Tool>
          <Tool label="Mixer">
            <Glyph>
              <g fill="none" stroke="currentColor" strokeWidth="1.500">
                <path d="M9 0v9M9 19v9M19 0v9M19 19v9M5 10h7v8H5zM16 10h7v8h-7zM6 14h2M10 14h2M17 14h2M21 14h2" />
              </g>
            </Glyph>
          </Tool>
          <Tool label="Browser">
            <Glyph>
              <path d="M1 2h5l1 2h6v7H1zM6 13v13M6 16h6M6 25h6" fill="none" stroke="currentColor" strokeWidth="1.500" />
              <path d="M14 12l5 3 3-3v3h4v2h-4v3l-3-3-5 3zM14 21l5 3 3-3v3h4v2h-4v2l-3-2-5 2z" />
            </Glyph>
          </Tool>
          <Tool label="Project files">
            <Glyph>
              <path d="M6 4h10v2H8v17H6z" />
              <path d="M9 6h9v6h6v14H9zM19 6l5 5h-5z" />
            </Glyph>
          </Tool>
          <Tool label="Plugins">
            <Glyph><path d="M9 1h3v6h5V1h3v6h3v5q-1 3-5 7l-2 8h-3l-2-8q-4-4-5-7V7h3z" /></Glyph>
          </Tool>
          <Tool label="Tempo tapper">
            <Glyph>
              <path d="M15 3l5-3 4 6-5 3zM17 7l-7 6-1-1 7-7z" />
              <path d="M5 14q2-5 5-2l3 4-4 3v1l13 6v1h-5L8 22l-1 5H2v-2h2z" />
            </Glyph>
          </Tool>
          <Tool label="Touch">
            <Glyph><path d="M5 5q2-1 3 0l6 5 2-2q5 0 6 4l1 5-5 5-6 0-6-3q-1-2 2-2l2-1-6-8zM19 24l5-6 1 2-4 5z" /></Glyph>
          </Tool>
          <Tool label="Shop" tone="blue"><ShoppingCart className="size-[18px]" strokeWidth={2} /></Tool>
        </div>
      </Group>
      <Group className="w-[215px] pl-[3px]">
        <a href="#news" className="flex h-[41px] w-[206px] items-center justify-between border border-[#3b2f63] bg-[#4b4074] pl-1 pr-[3px] text-[14px] leading-[17px] text-[#f2ecf8]">
          <span>
            <span className="mr-[7px] text-[#a89fc4]">Today</span>
            A newer version of
            <br />
            FL Studio is available!
          </span>
          <svg viewBox="0 0 20 20" className="size-5">
            <circle cx="10" cy="10" r="9" fill="#6d6590" stroke="#c8c2d8" strokeWidth="1.500" />
            <path d="M5 3l4-1 2 2-2 3 1 2-3 2-3-1-2-2zM8 11l4 1 1 3-2 4-3-1-1-4zM13 3l5 4v5l-3-1-2-3z" fill="#d6d0e2" />
          </svg>
        </a>
      </Group>
    </div>
  );
}

/* ---------- playlist ---------- */

function TitleBar() {
  return (
    <div className="flex h-[29px] items-center gap-[7px] pr-[7px] pb-[2px] pl-[15px] text-white">
      <Tri className="h-[10px] w-[6px]" />
      <Magnet className="mr-[13px] ml-[6px] size-[18px] text-[#6fe08f]" />
      <svg viewBox="0 0 20 20" className="size-5" fill="none" stroke="currentColor" strokeWidth="1.800">
        <path d="M2 3l5-1 10 11v5h-4L2 8zM4 9l5-6M5 5l10 11" />
      </svg>
      <svg viewBox="0 0 20 20" className="size-5" fill="#6cc4f4">
        <path d="M1 7l2-5 2 4 1-5 2 4 2-3 2 5-3 5-1 3-2-2-1 5-1-4-3 2 1-5zM10 9l3-1 6 8-1 3-3-1z" />
      </svg>
      <Ban className="size-[19px] rotate-90" strokeWidth={2.5} />
      <svg viewBox="0 0 20 18" className="h-[18px] w-5" fill="currentColor">
        <path d="M0 6h4l6-5v16l-6-5H0z" />
        <path d="M12 5l6 8M18 5l-6 8" stroke="currentColor" strokeWidth="2" />
      </svg>
      <svg viewBox="0 0 20 14" className="h-[14px] w-5" fill="currentColor">
        <path d="M0 7l7-6v4h6V1l7 6-7 6V9H7v4z" />
      </svg>
      <svg viewBox="0 0 20 20" className="size-5" fill="currentColor">
        <path d="M1 2h7v16zM9 2h5q4 1 4 5v11h-4L9 9z" />
        <circle cx="14" cy="10" r="1.500" fill="#352445" />
      </svg>
      <svg viewBox="0 0 20 20" className="size-5" fill="none" stroke="currentColor" strokeWidth="2.500">
        <path d="M2 8V3h5M13 3h5v5M18 12v5h-5M7 17H2v-5" />
      </svg>
      <Search className="size-5" strokeWidth={2.5} />
      <svg viewBox="0 0 20 18" className="h-[18px] w-5" fill="currentColor">
        <path d="M0 6h4l6-5v16l-6-5H0zM12 4h2v10h-2zM16 4h2v10h-2z" />
      </svg>
      <svg viewBox="0 0 20 18" className="ml-[10px] h-[18px] w-5" fill="none" stroke="currentColor" strokeWidth="1.800">
        <path d="M1 6h4l5-5v16l-5-5H1z" />
        <path d="M13 4l5 5-5 5z" fill="currentColor" />
      </svg>
      <h1 className="flex items-center gap-2 font-['Noto_Sans'] text-[16px] leading-5">
        Playlist - Arrangement <Tri className="h-[9px] w-1 text-[#8d7c9c]" /> 909 Crash{" "}
        <Tri className="h-[9px] w-1 text-[#8d7c9c]" />
      </h1>
      <div className="ml-auto flex items-center gap-3">
        <button type="button" aria-label="Minimize playlist" className="mb-1 h-[3px] w-[9px] bg-white" />
        <button type="button" aria-label="Restore playlist">
          <svg viewBox="0 0 14 14" className="size-[14px]" fill="none" stroke="currentColor" strokeWidth="1.500">
            <path d="M4 2h8v8M2 4h8v8H2zM2 5h8" />
          </svg>
        </button>
        <button type="button" aria-label="Close playlist">
          <svg viewBox="0 0 14 14" className="size-[14px]" stroke="currentColor" strokeWidth="2">
            <path d="M2 2l10 10M12 2L2 12" />
          </svg>
        </button>
      </div>
    </div>
  );
}

function Notes({ pattern, color, className }: { pattern: Pattern; color: string; className?: string }) {
  return (
    <svg viewBox={`0 0 ${pattern.width} 50`} preserveAspectRatio="none" shapeRendering="crispEdges" className={className} fill={color}>
      {pattern.notes.map(([x, y, w, h], i) => (
        <rect key={i} x={x} y={y} width={w} height={h} />
      ))}
    </svg>
  );
}

const HILLS_BACK =
  "M0 50V25h4L6 11l7-1 2 9h5l8-4 10-7 8-5 19-1 12 2 5 6 6-7h9l6 7 7 8 6 3 4-2 10-1 10-8 10-5 8-1 6 4 6 5 5-4 9-1 6 10 5 6h15l5 2v24z";
const HILLS_FRONT =
  "M0 50V40l8-7 4 4 8-9 10-8 12-12 10-4 10-1 6 7 8 7 4-1 8-6 4 8 8 1 8 2 7 5 5 5 10-9 10-8 8-6 8 1 9 6 5-1 8 2 8 3 6 5 16 1 5 8 2 17z";

function Hills({ color, className }: { color: string; className?: string }) {
  return (
    <svg viewBox="0 0 215 50" preserveAspectRatio="none" className={className} fill={color}>
      <path d={HILLS_BACK} opacity=".6" />
      <path d={HILLS_FRONT} opacity=".55" />
    </svg>
  );
}

function Picker() {
  return (
    <aside className="flex w-[202px] shrink-0 flex-col">
      <div className="flex h-[50px] items-center gap-[37px] pt-[14px] pl-5 text-[#6a587a]">
        <button type="button" aria-label="Patterns"><Keys className="h-[15px] w-[19px] text-white" /></button>
        <button type="button" aria-label="Audio clips"><Wave className="h-[17px] w-[26px]" /></button>
        <button type="button" aria-label="Automation clips"><LinkNodes size={20} /></button>
      </div>
      <div className="flex min-h-0 flex-1 border-t border-[#190a26]">
        <ul className="flex w-[176px] flex-col gap-[3px] overflow-hidden border-l border-[#190a26] bg-[#2a0a3e] py-[2px] pr-[3px] pl-1">
          {PICKER.map((p) => (
            <li key={p.name} className="relative shrink-0">
              <button
                type="button"
                className={`relative flex h-[35px] w-[168px] items-center overflow-hidden border bg-linear-to-b pl-[2px] text-[15px] leading-[18px] ${PICKER_TONES[p.tone]}`}
              >
                <Notes pattern={P[p.pattern]} color={p.tone === "mint" ? "#ffffff" : "currentColor"} className="absolute inset-0 size-full opacity-15" />
                {p.kind === "event" && <Hills color="#a08cb4" className="absolute inset-0 size-full opacity-35" />}
                <span className="relative flex items-center gap-[3px] whitespace-pre">
                  <span className={p.tone === "mint" ? "text-white" : ""}><KindIcon kind={p.kind} /></span>
                  <span className={p.name.startsWith("SUPER") ? COND : ""}>{p.name}</span>
                </span>
              </button>
              {p.selected && (
                <svg viewBox="0 0 10 16" className="absolute top-[9px] -left-px h-4 w-[10px]" fill="#e8484e" stroke="#2a0a1e">
                  <path d="M1 1l8 7-8 7z" />
                </svg>
              )}
            </li>
          ))}
        </ul>
        <div className="flex w-[19px] flex-col border-r border-[#190a26] bg-[#291838]">
          <div className="flex h-[17px] items-center justify-center border border-[#584668] bg-[#4a385a]"><span className="h-[5px] w-[2px] bg-[#1c0c2b]" /></div>
          <button type="button" aria-label="Scroll patterns up" className="flex h-[17px] items-center justify-center border border-[#463456] bg-[#3b2949]">
            <Chevron d="M1 7l4-4 4 4" />
          </button>
          <div className="h-[545px] border border-[#463456] bg-[#3a2848]" />
          <button type="button" aria-label="Scroll patterns down" className="mt-auto flex h-[17px] items-center justify-center border border-[#463456] bg-[#3b2949]">
            <Chevron d="M1 3l4 4 4-4" />
          </button>
        </div>
      </div>
      <button type="button" aria-label="Add pattern" className="mr-[26px] flex h-[25px] items-center justify-center border-t border-[#190a26] text-white">
        <svg viewBox="0 0 10 10" className="size-[10px]" fill="#e4d8ee"><path d="M4 0h2v4h4v2H6v4H4V6H0V4h4z" /></svg>
      </button>
    </aside>
  );
}

function Tabs() {
  return (
    <div className="flex h-full w-[139px] text-white">
      <button type="button" aria-label="Add track" className="flex w-[37px] items-end justify-center bg-[#4e3c5e] pb-[9px] pl-1 [clip-path:polygon(16px_0,100%_0,100%_100%,0_100%,10px_8px)]">
        <svg viewBox="0 0 10 10" className="size-[10px]" fill="currentColor"><path d="M4 0h2v4h4v2H6v4H4V6H0V4h4z" /></svg>
      </button>
      <div className="grid flex-1 grid-cols-3 place-items-center border-t border-l border-[#1f102e] bg-[#4e3c5e] px-[2px] text-[#75638a]">
        <Wave className="h-4 w-6 text-white" />
        <LinkNodes size={20} />
        <Keys className="h-[15px] w-5" />
        <svg viewBox="0 0 12 12" className="size-3" fill="none" stroke="#fff" strokeWidth="2"><path d="M1 1q2 0 5 5t5 5M11 1Q9 1 6 6t-5 5" /></svg>
        <svg viewBox="0 0 14 12" className="h-3 w-[14px]" fill="none" stroke="currentColor" strokeWidth="1.500"><path d="M2 1v10M1 11q6-1 6-5t6-5M2 6h5" /></svg>
        <svg viewBox="0 0 14 10" className="h-[10px] w-[14px]" fill="currentColor"><path d="M0 5l5-4v3h1v2H5v3zM14 5L9 1v3H8v2h1v3z" /></svg>
      </div>
    </div>
  );
}

// Whole-song minimap, 2px per track
function Overview() {
  const ox = (bar: number) => Math.round(((bar - 1) * 1493) / 90);
  return (
    <div className="flex h-[26px] border-b-2 border-[#1c0c2b]">
      <button type="button" aria-label="Scroll left" className="flex w-[25px] items-center justify-center border border-[#463456] bg-[#3b2949]">
        <Chevron d="M7 1L3 5l4 4" />
      </button>
      <div className="flex-1 border border-[#65527a] bg-[#3e2159]">
        <svg viewBox="0 0 1493 22" preserveAspectRatio="none" shapeRendering="crispEdges" className="block h-[22px] w-full">
          {TRACKS.map((t, row) =>
            t.clips.map((c, i) => (
              <rect
                key={`${row}-${i}`}
                x={ox(c.start)}
                y={row * 2}
                width={Math.max(6, ox(c.end) - ox(c.start) - (row > 6 ? 1 : 0))}
                height={row < 2 || row > 8 ? 2 : 1}
                fill={TONES[c.tone].map}
              />
            )),
          )}
          <rect x="0" y="8" width={ox(73)} height="1" fill="#ee40ee" />
        </svg>
      </div>
      <button type="button" aria-label="Scroll right" className="flex w-[26px] items-center justify-center border border-[#463456] bg-[#3b2949]">
        <Chevron d="M3 1l4 4-4 4" />
      </button>
    </div>
  );
}

function Ruler() {
  return (
    <div className="relative h-[25px] overflow-hidden border-b-2 border-[#220f38] bg-[#15012b]">
      {Array.from({ length: 31 }, (_, i) => i * 4 + 1).map((bar) => (
        <span
          key={bar}
          className={`absolute top-[5px] text-[13px] leading-4 text-[#8e80a4] ${COND}`}
          style={{ left: barX(bar) }}
        >
          {bar}
        </span>
      ))}
      <svg viewBox="0 0 10 12" className="absolute top-[2px] left-0 h-3 w-[10px]"><path d="M0 0h10L1 11H0z" fill="#c583e0" /></svg>
    </div>
  );
}

function Grid() {
  return (
    <svg className="absolute inset-0 size-full" shapeRendering="crispEdges">
      {Array.from({ length: 40 }, (_, i) => (
        <rect key={i} x={barX(i * 4 + 1)} y="0" width="51" height="100%" fill={i % 2 ? "#2b0449" : "#320b50"} />
      ))}
      {Array.from({ length: 160 }, (_, i) => (
        <rect key={i} x={barX(i + 1)} y="0" width="1" height="100%" fill="#0b0022" />
      ))}
    </svg>
  );
}

function ClipBody({ clip, width }: { clip: Clip; width: number }) {
  if (clip.kind === "audio") {
    const small = clip.tone === "lilac";
    return (
      <svg viewBox="0 0 12 50" preserveAspectRatio="none" className="size-full">
        {small ? (
          <>
            <path d="M0 14h5v3h3v4h3v8H8v4H5v3H0z" fill={clip.note} />
            <path d="M10 21h2v8h-2z" fill="#a0522e" opacity=".7" />
          </>
        ) : (
          <path d="M0 25l6-4 5-9v27l-5-9z" fill="#1546b4" />
        )}
      </svg>
    );
  }
  if (clip.kind === "event") return <Hills color="#b496c6" className="size-full" />;
  if (clip.kind === "auto") {
    const long = clip.tone === "slate";
    const line = long
      ? "M0 2H25L27 49H102V2H127L129 49H280"
      : "M0 2H26V49H51";
    const fill = long ? "M0 2H25L27 50H0ZM102 2H127L129 50H102Z" : "M0 2H26V50H0Z";
    return (
      <svg viewBox={`0 0 ${width} 50`} className="size-full" shapeRendering="crispEdges">
        <path d={fill} fill={long ? "#3a2358" : "#44284f"} />
        <path d={line} fill="none" stroke={long ? "#b4bce8" : "#e2ecb0"} strokeWidth="1" />
      </svg>
    );
  }
  return (
    <>
      {clip.pattern === "cello" && (
        <svg viewBox="0 0 228 50" preserveAspectRatio="none" className="absolute inset-0 size-full" fill="#a49fbe">
          <path d="M9 50V10l5-3 5 2 4 0 2-8 5 8 10-2 11-4 6 6 4-7 5 7 9-8 7 8 4-5 4 4 8-5 10 5 6-3 4 5H228V50Z" opacity=".65" />
          <path d="M9 50V10H118V50Z" opacity=".2" />
        </svg>
      )}
      <Notes pattern={P[clip.pattern ?? "empty"]} color={clip.note ?? "#fff"} className="absolute inset-0 size-full" />
    </>
  );
}

function ClipView({ clip, body }: { clip: Clip; body: string }) {
  const left = barX(clip.start);
  const width = barX(clip.end) - left;
  const title = clip.title ?? "";
  const tight = title.startsWith("SUPER");
  return (
    <div className="absolute top-0 flex h-[69px] flex-col" style={{ left, width }}>
      <div className={`flex h-[19px] shrink-0 items-center overflow-hidden rounded-[2px] border leading-[17px] ${tight ? "text-[13px]" : "text-[14px]"} ${TONES[clip.tone].head}`}>
        {clip.title === undefined ? (
          clip.tone === "sky" && (
            <svg viewBox="0 0 12 12" className="size-[11px]" fill="#e8ecff"><path d="M1 1l3 4h2l2-3v3h3v2H8v3L6 7H4l-3 4z" /></svg>
          )
        ) : (
          <span className={`flex items-center ${clip.kind === "auto" ? "gap-[2px] whitespace-nowrap" : "gap-[3px] pl-[2px] whitespace-nowrap"}`}>
            <span className={clip.tone === "mint" ? "text-white" : ""}><KindIcon kind={clip.kind} /></span>
            <span className={tight || (title.length < 7 && title !== "Chords") ? COND : ""}>{title}</span>
          </span>
        )}
      </div>
      <div className={`relative min-h-0 flex-1 ${body}`}>
        <ClipBody clip={clip} width={width} />
      </div>
    </div>
  );
}

function TrackHeader({ track }: { track: Track }) {
  return (
    <div className={`relative h-[70px] shrink-0 rounded-r-[8px] border-b border-b-black/20 bg-linear-to-b px-[2px] pt-[2px] text-[15px] leading-[18px] ${track.header}`}>
      <p>{track.name}</p>
      {track.more && <p className={`font-normal whitespace-nowrap ${COND}`}>{track.more}</p>}
      <span className="absolute bottom-[5px] left-[17px] flex gap-[2px] opacity-30">
        {[0, 1, 2].map((i) => <i key={i} className="size-[2px] bg-black" />)}
      </span>
      <button
        type="button"
        aria-label={`Mute ${track.name}`}
        className="absolute right-[5px] bottom-[5px] size-3 rounded-full border-2 border-[#4d1470] bg-linear-to-b from-[#f9b4fb] to-[#e43cec] ring-1 ring-white/20"
      />
    </div>
  );
}

export default function App() {
  return (
    <div className="flex h-screen flex-col overflow-hidden bg-[#352445] font-['Roboto','Noto_Sans',sans-serif] text-white">
      <header className="shrink-0 border-t border-[#463454] bg-[#594668]">
        <TopRow />
        <SecondRow />
      </header>
      <main className="flex min-h-0 flex-1">
        <div className="w-[10px] shrink-0 border-r border-[#22132f] bg-[#392849]" />
        <div className="flex min-w-0 flex-1 flex-col">
          <TitleBar />
          <div className="flex min-h-0 flex-1">
            <Picker />
            <div className="flex min-w-0 flex-1 flex-col">
              <div className="flex h-[51px] shrink-0">
                <Tabs />
                <div className="min-w-0 flex-1">
                  <Overview />
                  <Ruler />
                </div>
              </div>
              <div className="flex min-h-0 flex-1 overflow-hidden">
                <div className="flex w-[126px] shrink-0 flex-col bg-[#14052a]">
                  {TRACKS.map((t) => <TrackHeader key={t.name} track={t} />)}
                </div>
                <div className="w-[13px] shrink-0 border-x border-[#14052a] bg-[#251539]" />
                <div className="relative min-w-0 flex-1 overflow-hidden">
                  <Grid />
                  {TRACKS.map((t) => (
                    <div key={t.name} className="relative h-[70px] border-b-2 border-[#14002b]">
                      {t.clips.map((c, i) => <ClipView key={i} clip={c} body={t.body} />)}
                    </div>
                  ))}
                </div>
              </div>
            </div>
            <div className="flex w-6 shrink-0 flex-col bg-[#291838]">
              <div className="flex h-[26px] items-center justify-center border border-[#65527a] bg-[#4a385a]"><span className="h-[6px] w-[2px] bg-[#1c0c2b]" /></div>
              <button type="button" aria-label="Scroll up" className="flex h-[25px] items-center justify-center border border-[#463456] bg-[#3b2949]">
                <Chevron d="M0 7l5-4 5 4" />
              </button>
              <div className="h-10 border border-[#4a385a] bg-[#3a2848]" />
              <button type="button" aria-label="Scroll down" className="mt-auto flex h-[25px] items-center justify-center border border-[#463456] bg-[#3b2949]">
                <Chevron d="M0 3l5 4 5-4" />
              </button>
            </div>
          </div>
        </div>
      </main>
    </div>
  );
}
